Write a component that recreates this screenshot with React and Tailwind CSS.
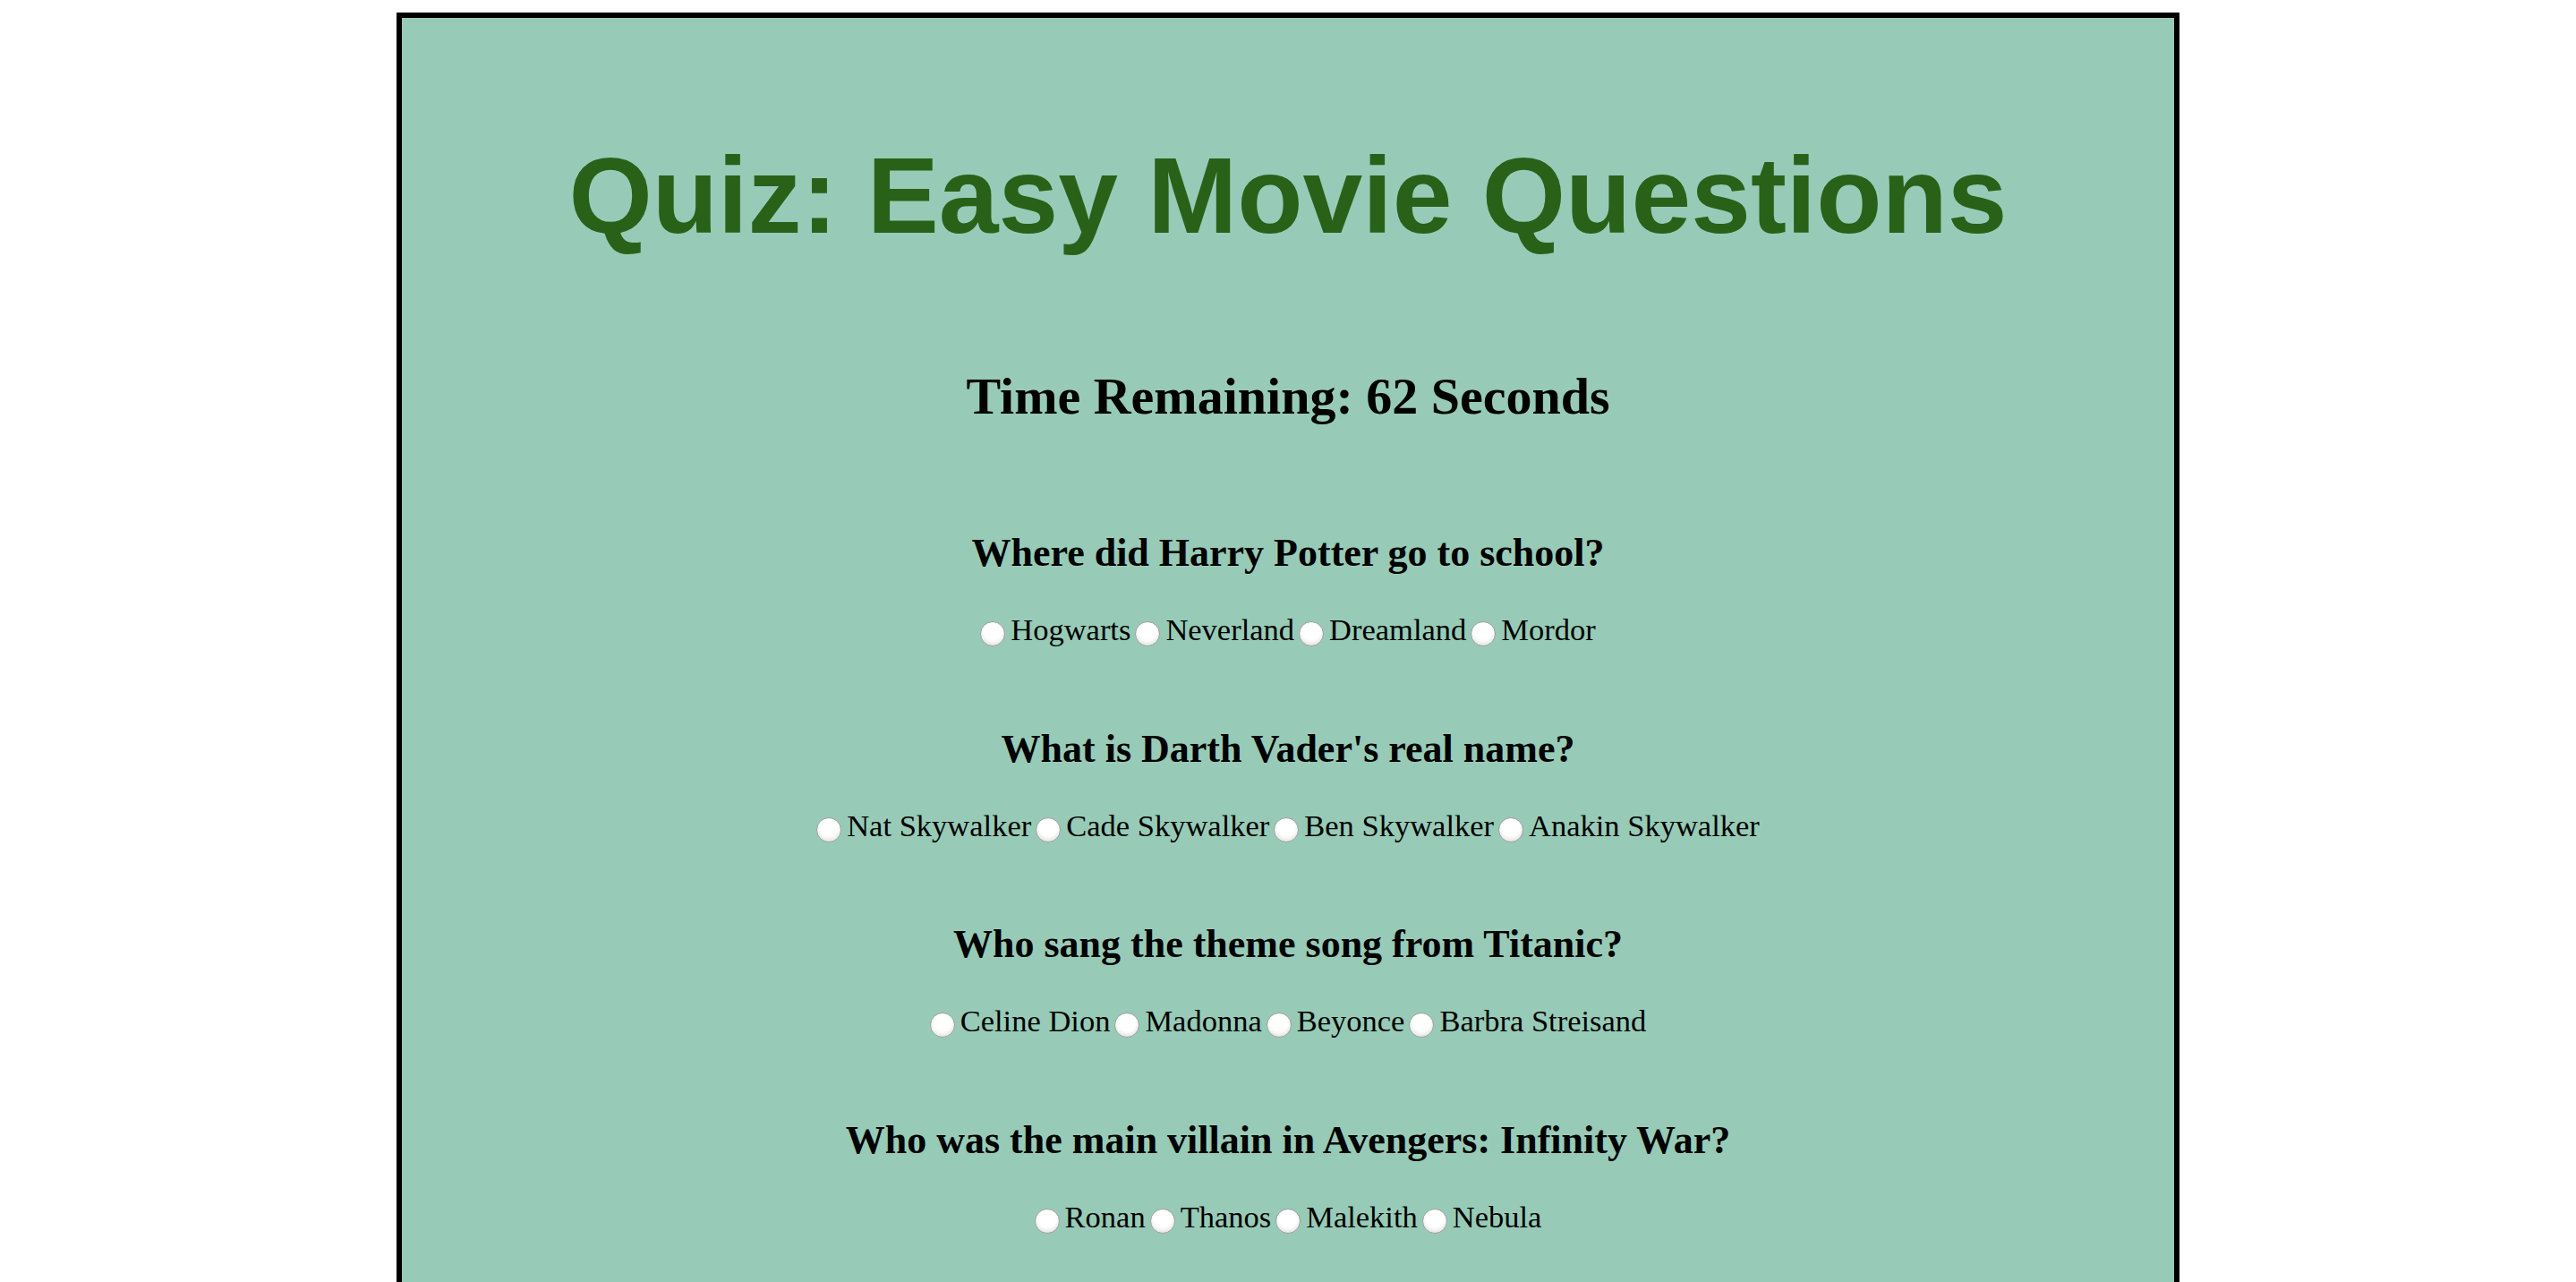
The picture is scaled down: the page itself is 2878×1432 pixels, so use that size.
import React, { useState } from 'react';

const questions = [
  {
    q: 'Where did Harry Potter go to school?',
    answers: ['Hogwarts', 'Neverland', 'Dreamland', 'Mordor'],
  },
  {
    q: "What is Darth Vader's real name?",
    answers: ['Nat Skywalker', 'Cade Skywalker', 'Ben Skywalker', 'Anakin Skywalker'],
  },
  {
    q: 'Who sang the theme song from Titanic?',
    answers: ['Celine Dion', 'Madonna', 'Beyonce', 'Barbra Streisand'],
  },
  {
    q: 'Who was the main villain in Avengers: Infinity War?',
    answers: ['Ronan', 'Thanos', 'Malekith', 'Nebula'],
  },
];

const serif = "font-['Liberation_Serif','Times_New_Roman',serif]";

const Question = ({ item, index, picked, onPick }) => (
  <div className={index === 0 ? 'mt-[124px]' : 'mt-[92.5px]'}>
    <h3 className={`${serif} text-center text-[44px] leading-[44px] font-bold text-black`}>{item.q}</h3>
    <div className={`${serif} mt-[46px] flex justify-center items-start text-[34.5px] leading-[35px] text-black`}>
      {item.answers.map((a, i) => (
        <label key={a} className="flex items-start cursor-pointer" onClick={() => onPick(index, i)}>
          <span
            className={`mt-[8px] ${i === 0 ? '' : 'ml-[5px]'} mr-[6px] w-[28px] h-[28px] shrink-0 rounded-full bg-white border border-[#9c9c9c] shadow-[inset_0_-3px_4px_rgba(0,0,0,0.10)] flex items-center justify-center`}
          >
            {picked === i && <span className="w-[12px] h-[12px] rounded-full bg-[#333]" />}
          </span>
          <span className="whitespace-nowrap">{a}</span>
        </label>
      ))}
    </div>
  </div>
);

const App = () => {
  const [picks, setPicks] = useState({});

  const handlePick = (q, a) => {
    setPicks({ ...picks, [q]: a });
  };

  return (
    <div className="min-h-screen bg-white pt-[14px]">
      <div className="mx-auto w-[1992px] min-h-[1500px] border-[6px] border-black bg-[#97cbb7] pb-[120px]">
        {/* Header */}
        <h1 className="mt-[138px] text-center font-['Liberation_Sans',Arial,sans-serif] text-[120px] leading-[120px] font-bold text-[#2a6119]">
          Quiz: Easy Movie Questions
        </h1>
        <h2 className={`${serif} mt-[136px] text-center text-[58px] leading-[58px] font-bold text-black`}>
          Time Remaining: 62 Seconds
        </h2>

        {/* Questions */}
        {questions.map((item, idx) => (
          <Question key={idx} item={item} index={idx} picked={picks[idx]} onPick={handlePick} />
        ))}
      </div>
    </div>
  );
};

export default App;
